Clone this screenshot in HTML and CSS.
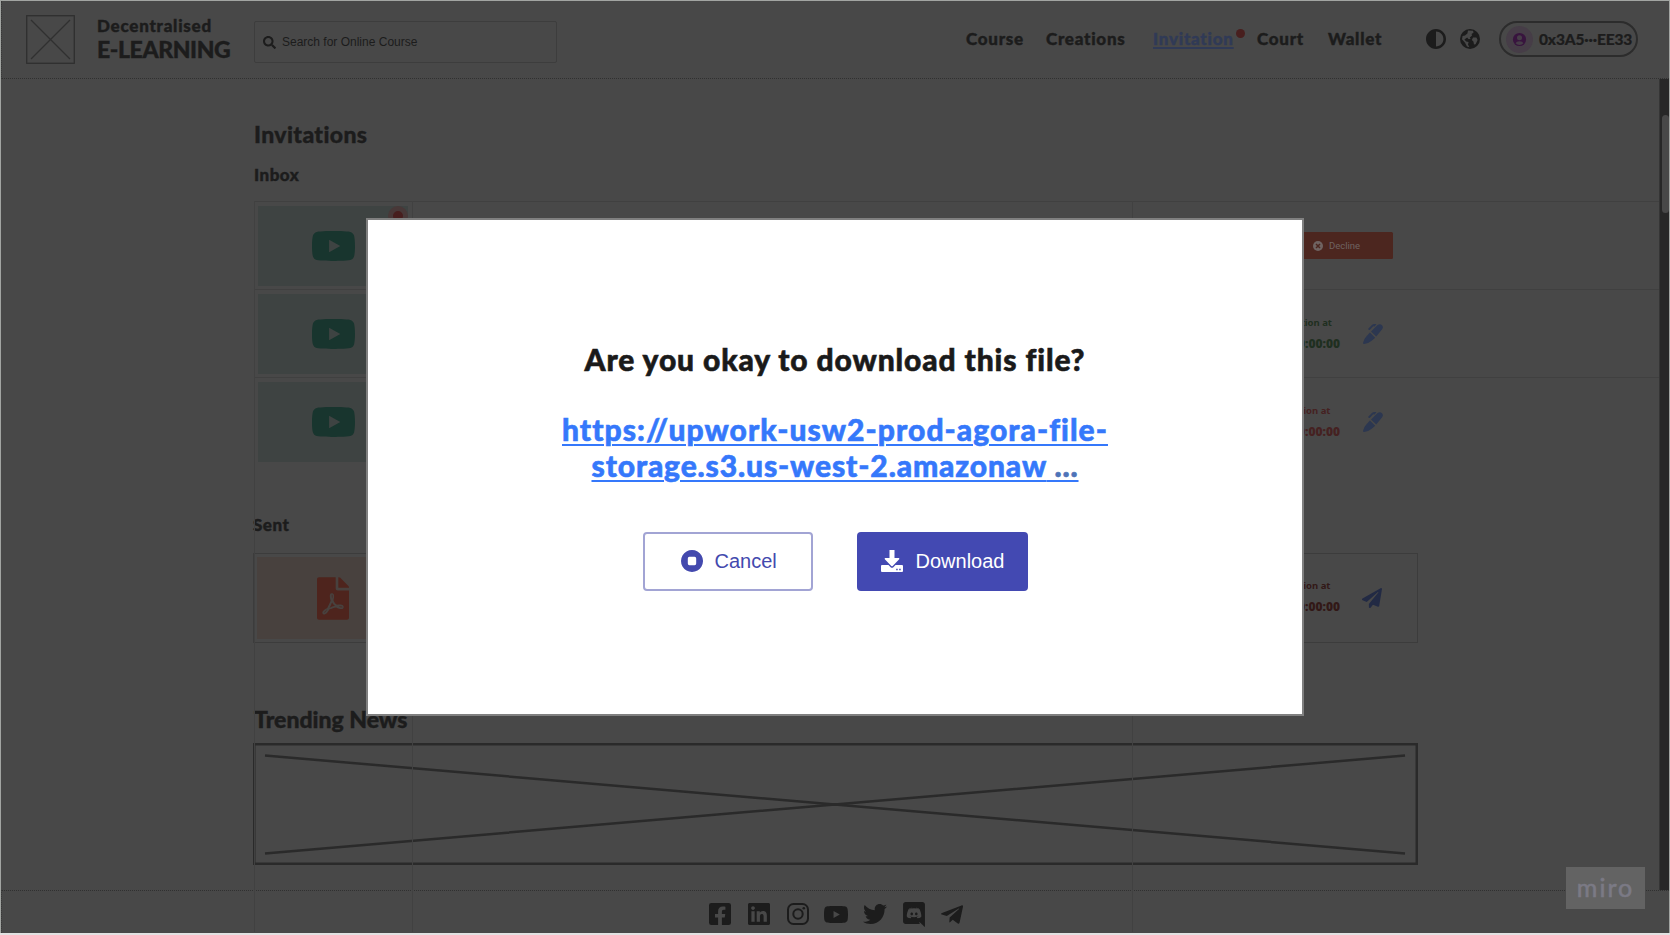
FILE: index.html
```html
<!DOCTYPE html>
<html lang="en">
<head>
<meta charset="utf-8">
<title>Decentralised E-Learning</title>
<link rel="stylesheet" href="styles.css">
</head>
<body>
<svg class="sprite" aria-hidden="true">
  <symbol id="youtube" viewBox="15 64 546 384" preserveAspectRatio="none"><path d="M549.655 124.083c-6.281-23.65-24.787-42.276-48.284-48.597C458.781 64 288 64 288 64S117.22 64 74.629 75.486c-23.497 6.322-42.003 24.947-48.284 48.597-11.412 42.867-11.412 132.305-11.412 132.305s0 89.438 11.412 132.305c6.281 23.65 24.787 41.5 48.284 47.821C117.22 448 288 448 288 448s170.78 0 213.371-11.486c23.497-6.321 42.003-24.171 48.284-47.821 11.412-42.867 11.412-132.305 11.412-132.305s0-89.438-11.412-132.305zm-317.51 213.508V175.185l142.739 81.205-142.739 81.201z"/></symbol>
  <symbol id="pen" viewBox="0 0 512 512"><path d="M205 192 365 35Q405-5 462 10 512 35 510 85 505 115 480 145L338 322z"/><path d="M128 125 235 22Q258 0 285 0H345L300 62 262 60 172 152Q150 158 128 125z"/><path d="M178 220 312 350 222 430A327 327 0 0 1 26 512C11 513-2 500 0 485A327 327 0 0 1 84 320z"/></symbol>
  <symbol id="plane" viewBox="0 0 512 512"><path d="M476 3.2L12.5 270.6c-18.1 10.4-15.8 35.6 2.2 43.2L121 358.4l287.3-253.2c5.5-4.9 13.3 2.6 8.6 8.3L176 407v80.5c0 23.6 28.5 32.9 42.5 15.8L282 426l124.6 52.2c14.2 6 30.4-2.9 33-18.2l72-432C515 7.8 493.3-6.8 476 3.2z"/></symbol>
</svg>

<div class="app">
  <header class="header">
    <svg class="logo" viewBox="0 0 49 49"><rect x=".7" y=".7" width="47.6" height="47.6"/><path d="M5 5 44 44M44 5 5 44"/></svg>
    <div class="brand"><span class="brand-top">Decentralised</span><span class="brand-main">E-LEARNING</span></div>
    <div class="search">
      <svg viewBox="0 0 512 512"><path d="M505 442.7L405.3 343c-4.5-4.5-10.6-7-17-7H372c27.6-35.3 44-79.7 44-128C416 93.1 322.9 0 208 0S0 93.1 0 208s93.1 208 208 208c48.3 0 92.7-16.4 128-44v16.3c0 6.4 2.5 12.5 7 17l99.7 99.7c9.4 9.4 24.6 9.4 33.9 0l28.3-28.3c9.4-9.4 9.4-24.6.1-34zM208 336c-70.7 0-128-57.2-128-128 0-70.7 57.2-128 128-128 70.7 0 128 57.2 128 128 0 70.7-57.2 128-128 128z"/></svg>
      <span>Search for Online Course</span>
    </div>
    <nav class="nav">
      <a class="n-course">Course</a><a class="n-creations">Creations</a><a class="n-invitation">Invitation<i class="dot"></i></a><a class="n-court">Court</a><a class="n-wallet">Wallet</a>
    </nav>
    <svg class="tool" viewBox="8 8 496 496"><path d="M8 256c0 136.966 111.033 248 248 248s248-111.034 248-248S392.966 8 256 8 8 119.033 8 256zm248 184V72c101.705 0 184 82.311 184 184 0 101.705-82.311 184-184 184z"/></svg>
    <svg class="tool globe" viewBox="0 0 20 20"><circle cx="10" cy="10" r="10"/><path class="land" d="M8 1.6 13 1.8 13.6 3.4 11.6 5 12 6.6 9.8 8.4 10.6 10 8.4 10 7.2 8.4 4.4 10.4 6.2 12.4 8.6 13 8 15.4 9.4 18.2 7 17.6 5 13.8 2 10.2 2.6 7 5 6.6 7.4 4.4zM13 8.6 16.4 8.4 17.6 11 15.6 15.2 14 15.4 13.4 12.4 11.8 11z"/></svg>
    <div class="wallet">
      <span class="avatar"><svg viewBox="0 0 16 16"><circle cx="8" cy="8" r="7"/><circle class="hole" cx="8" cy="6.2" r="2.7"/><path class="hole" d="M3.8 12.1Q4.5 9.8 8 9.8T12.2 12.1Q10.5 13.9 8 13.9T3.8 12.1z"/></svg></span>
      <span class="address">0x3A5···EE33</span>
    </div>
  </header>

  <main class="main">
    <div class="guides"><i></i><i></i><i></i></div>
    <section class="content">
      <h1 class="title invitations">Invitations</h1>
      <h2 class="subtitle inbox-title">Inbox</h2>
      <div class="inbox">
        <article class="row">
          <div class="thumb"><svg class="yt"><use href="#youtube"/></svg><i class="live"></i></div>
          <button class="decline"><svg viewBox="0 0 10 10"><circle cx="5" cy="5" r="5"/><path d="M3 3 7 7M7 3 3 7"/></svg>Decline</button>
        </article>
        <article class="row">
          <div class="thumb"><svg class="yt"><use href="#youtube"/></svg></div>
          <div class="expiry green"><span>Expiration at</span><b>00:00:00</b></div>
          <svg class="action"><use href="#pen"/></svg>
        </article>
        <article class="row">
          <div class="thumb"><svg class="yt"><use href="#youtube"/></svg></div>
          <div class="expiry red"><span class="shift">Expiration at</span><b>00:00:00</b></div>
          <svg class="action"><use href="#pen"/></svg>
        </article>
      </div>
      <h2 class="subtitle sent-title">Sent</h2>
      <article class="row sent">
        <div class="thumb file"><svg viewBox="0 0 384 512"><path d="M181.9 256.1c-5-16-4.9-46.9-2-46.9 8.4 0 7.6 36.9 2 46.9zm-1.7 47.2c-7.7 20.2-17.3 43.3-28.4 62.7 18.3-7 39-17.2 62.9-21.9-12.7-9.6-24.9-23.4-34.5-40.8zM86.1 428.1c0 .8 13.2-5.4 34.9-40.2-6.7 6.3-29.1 24.5-34.9 40.2zM248 160h136v328c0 13.3-10.7 24-24 24H24c-13.3 0-24-10.7-24-24V24C0 10.7 10.7 0 24 0h200v136c0 13.2 10.8 24 24 24zm-8 171.8c-20-12.2-33.3-29-42.7-53.8 4.5-18.5 11.6-46.6 6.2-64.2-4.7-29.4-42.4-26.5-47.8-6.8-5 18.3-.4 44.1 8.1 77-11.6 27.6-28.7 64.6-40.8 85.8-.1 0-.1.1-.2.1-27.1 13.9-73.6 44.5-54.5 68 5.6 6.9 16 10 21.5 10 17.9 0 35.7-18 61.1-61.8 25.8-8.5 54.1-19.1 79-23.2 21.7 11.8 47.1 19.5 64 19.5 29.2 0 31.2-32 19.7-43.4-13.9-13.6-54.3-9.7-73.6-7.2zM377 105L279 7c-4.5-4.5-10.6-7-17-7h-6v128h128v-6.1c0-6.3-2.5-12.4-7-16.9zm-74.1 255.3c4.1-2.7-2.5-11.9-42.8-9 37.1 15.8 42.8 9 42.8 9z"/></svg></div>
        <div class="expiry dark"><span class="shift">Expiration at</span><b>00:00:00</b></div>
        <svg class="action send"><use href="#plane"/></svg>
      </article>
      <h1 class="title trending">Trending News</h1>
      <svg class="news" viewBox="0 0 1165 122"><rect x="1.25" y="1.25" width="1162.5" height="119.5"/><path d="M12 12.5 1152 110.5M1152 12.5 12 110.5"/></svg>
    </section>
    <div class="scrollbar"><i></i></div>
  </main>

  <footer class="footer">
    <svg width="22" height="22" viewBox="0 32 448 448"><path d="M400 32H48A48 48 0 0 0 0 80v352a48 48 0 0 0 48 48h137.25V327.69h-63V256h63v-54.64c0-62.15 37-96.48 93.67-96.48 27.14 0 55.52 4.84 55.52 4.84v61h-31.27c-30.81 0-40.42 19.12-40.42 38.73V256h68.78l-11 71.69h-57.78V480H400a48 48 0 0 0 48-48V80a48 48 0 0 0-48-48z"/></svg>
    <svg width="22" height="22" viewBox="0 32 448 448"><path d="M416 32H31.9C14.3 32 0 46.5 0 64.3v383.4C0 465.5 14.3 480 31.9 480H416c17.6 0 32-14.5 32-32.3V64.3c0-17.8-14.4-32.3-32-32.3zM135.4 416H69V202.2h66.5V416zm-33.2-243c-21.3 0-38.5-17.3-38.5-38.5S80.9 96 102.2 96c21.2 0 38.5 17.3 38.5 38.5 0 21.3-17.2 38.5-38.5 38.5zm282.1 243h-66.4V312c0-24.8-.5-56.7-34.5-56.7-34.6 0-39.9 27-39.9 54.9V416h-66.4V202.2h63.7v29.2h.9c8.9-16.8 30.6-34.5 62.9-34.5 67.2 0 79.7 44.3 79.7 101.9V416z"/></svg>
    <svg class="line" width="22" height="22" viewBox="0 0 22 22"><rect x="1" y="1" width="20" height="20" rx="5.5"/><circle cx="11" cy="11" r="4.7"/><circle class="fill" cx="16.8" cy="5.2" r="1.3"/></svg>
    <svg width="24" height="17"><use href="#youtube"/></svg>
    <svg width="24" height="20" viewBox="0 48 512 416" preserveAspectRatio="none"><path d="M459.37 151.716c.325 4.548.325 9.097.325 13.645 0 138.72-105.583 298.558-298.558 298.558-59.452 0-114.68-17.219-161.137-47.106 8.447.974 16.568 1.299 25.34 1.299 49.055 0 94.213-16.568 130.274-44.832-46.132-.975-84.792-31.188-98.112-72.772 6.498.974 12.995 1.624 19.818 1.624 9.421 0 18.843-1.3 27.614-3.573-48.081-9.747-84.143-51.98-84.143-102.985v-1.299c13.969 7.797 30.214 12.67 47.431 13.319-28.264-18.843-46.781-51.005-46.781-87.391 0-19.492 5.197-37.36 14.294-52.954 51.655 63.675 129.3 105.258 216.365 109.807-1.624-7.797-2.599-15.918-2.599-24.04 0-57.828 46.782-104.934 104.934-104.934 30.213 0 57.502 12.67 76.67 33.137 23.715-4.548 46.456-13.32 66.599-25.34-7.798 24.366-24.366 44.833-46.132 57.827 21.117-2.273 41.584-8.122 60.426-16.243-14.292 20.791-32.161 39.308-52.628 54.253z"/></svg>
    <svg width="22" height="25" viewBox="0 0 448 512"><path d="M297.216 243.2c0 15.616-11.52 28.416-26.112 28.416-14.336 0-26.112-12.8-26.112-28.416s11.52-28.416 26.112-28.416c14.592 0 26.112 12.8 26.112 28.416zm-119.552-28.416c-14.592 0-26.112 12.8-26.112 28.416s11.776 28.416 26.112 28.416c14.592 0 26.112-12.8 26.112-28.416.256-15.616-11.52-28.416-26.112-28.416zM448 52.736V512c-64.494-56.994-43.868-38.128-118.784-107.776l13.568 47.36H52.48C23.552 451.584 0 428.032 0 398.848V52.736C0 23.552 23.552 0 52.48 0h343.04C424.448 0 448 23.552 448 52.736zm-72.96 242.688c0-82.432-36.864-149.248-36.864-149.248-36.864-27.648-71.936-26.88-71.936-26.88l-3.584 4.096c43.52 13.312 63.744 32.512 63.744 32.512-60.811-33.329-132.244-33.335-191.232-7.424-9.472 4.352-15.104 7.424-15.104 7.424s21.248-20.224 67.328-33.536l-2.56-3.072s-35.072-.768-71.936 26.88c0 0-36.864 66.816-36.864 149.248 0 0 21.504 37.12 78.08 38.912 0 0 9.472-11.52 17.152-21.248-32.512-9.728-44.8-30.208-44.8-30.208 3.766 2.636 9.976 6.053 10.496 6.4 43.21 24.198 104.588 32.126 159.744 8.96 8.96-3.328 18.944-8.192 29.44-15.104 0 0-12.8 20.992-46.336 30.464 7.68 9.728 16.896 20.736 16.896 20.736 56.576-1.792 78.336-38.912 78.336-38.912z"/></svg>
    <svg width="22" height="19" viewBox="0 64 448 376"><path d="M446.7 98.6l-67.6 318.8c-5.1 22.5-18.4 28.1-37.3 17.5l-103-75.9-49.7 47.8c-5.5 5.5-10.1 10.1-20.7 10.1l7.4-104.9 190.9-172.5c8.3-7.4-1.8-11.5-12.9-4.1L117.8 284 16.2 252.2c-22.1-6.9-22.5-22.1 4.6-32.7L418.2 66.4c18.4-6.9 34.5 4.1 28.5 32.2z"/></svg>
  </footer>
</div>

<div class="modal" role="dialog">
  <h2 class="question">Are you okay to download this file?</h2>
  <a class="link"><span class="l1">https://upwork-usw2-prod-agora-file-</span><br><span class="l2">storage.s3.us-west-2.amazonaw<em> ...</em></span></a>
  <div class="buttons">
    <button class="btn cancel"><svg width="22" height="22" viewBox="0 0 21 21"><path fill-rule="evenodd" d="M10.500 0a10.500 10.500 0 1 0 .01 0zM8 6.500h5q1.500 0 1.500 1.500v5q0 1.500-1.500 1.500H8q-1.500 0-1.500-1.500V8q0-1.500 1.500-1.500z"/></svg>Cancel</button>
    <button class="btn download"><svg width="22" height="22" viewBox="0 0 22 22"><path fill-rule="evenodd" d="M8.500 0h5v8h4.300q1 .3.400 1.200L11.700 16q-.7.500-1.400 0L3.800 9.200Q3.200 8.300 4.200 8h4.300zM1 15h6.500l2.400 2.400q1.100.8 2.200 0L14.500 15H21q1 0 1 1v5q0 1-1 1H1q-1 0-1-1v-5q0-1 1-1zM15.200 18.700v1.500h1.500v-1.500zM18.200 18.700v1.500h1.500v-1.500z"/></svg>Download</button>
  </div>
</div>
<div class="miro">miro</div>
</body>
</html>
```
FILE: styles.css
```css
* { box-sizing: border-box; }
body {
  margin: 0;
  position: relative;
  width: 1670px;
  height: 935px;
  overflow: hidden;
  background: #e2e2e2;
  font-family: "Liberation Sans", Arial, sans-serif;
}
svg { display: block; flex: none; fill: currentColor; }
button { font-family: inherit; }
.sprite { position: absolute; width: 0; height: 0; }

.app {
  width: 1670px;
  height: 933px;
  display: flex;
  flex-direction: column;
  background: #484848;
  color: #1c1c1c;
  border: 1px solid #a2a5a2;
  border-bottom: 0;
}

/* header */
.header {
  height: 78px;
  flex: none;
  display: flex;
  align-items: flex-start;
  border-bottom: 1px dotted #303030;
  border-left: 1px dotted #383838;
  font-family: Lato, sans-serif;
  font-weight: 900;
}
.logo { width: 49px; height: 49px; margin: 14px 0 0 24px; fill: none; stroke: #303030; stroke-width: 1.3; }
.brand { width: 157px; margin: 14px 0 0 22px; display: flex; flex-direction: column; white-space: nowrap; -webkit-text-stroke: .4px; }
.brand-top { font-size: 17px; line-height: 22px; letter-spacing: .75px; }
.brand-main { font-size: 23px; line-height: 24px; letter-spacing: -.4px; }
.search {
  width: 303px;
  height: 42px;
  margin-top: 20px;
  padding-left: 8px;
  display: flex;
  align-items: center;
  gap: 6px;
  border: 1.5px solid #3d3d3d;
  border-radius: 2px;
  font: 12px "Liberation Sans", Arial, sans-serif;
}
.search svg { width: 13px; height: 13px; }
.nav { width: 869px; margin-top: 27px; padding-left: 409px; display: flex; font-size: 17px; line-height: 22px; letter-spacing: .74px; white-space: nowrap; -webkit-text-stroke: .4px; }
.nav a { flex: none; }
.n-course { width: 80px; }
.n-creations { width: 107px; }
.n-invitation { width: 104px; position: relative; color: #303a56; text-decoration: underline; text-decoration-thickness: 1.5px; text-underline-offset: 2px; }
.n-court { width: 71px; }
.dot { position: absolute; left: 83px; top: 1px; width: 9px; height: 9px; border-radius: 50%; background: #481f1e; }
.tool { width: 20px; height: 20px; margin: 28px 14px 0 0; }
.globe { margin-right: 19px; }
.land { fill: #484848; }
.wallet {
  width: 139px;
  height: 36px;
  margin-top: 20px;
  padding-left: 5px;
  display: flex;
  align-items: center;
  gap: 6px;
  border: 2px solid #2c2c2c;
  border-radius: 18px;
}
.avatar { width: 27px; height: 27px; flex: none; border-radius: 50%; background: #463d47; color: #38143e; display: grid; place-items: center; }
.avatar svg { width: 15px; height: 15px; }
.hole { fill: #463d47; }
.address { font-size: 15.500px; letter-spacing: -.15px; white-space: nowrap; -webkit-text-stroke: .2px; }

/* body */
.main { flex: 1; display: flex; position: relative; }
.content { width: 1658px; padding-left: 253px; }
.guides { position: absolute; left: 253px; top: 122px; width: 880px; height: 731px; display: grid; grid-template-columns: 158px 720px 1px; pointer-events: none; }
.guides i { border-left: 1px solid #414141; }
.title, .subtitle { margin: 0; font-family: Lato, sans-serif; font-weight: 900; white-space: nowrap; -webkit-text-stroke: .4px; }
.title { font-size: 23px; line-height: 28px; }
.subtitle { font-size: 17px; line-height: 20px; letter-spacing: .5px; }
.invitations { padding-top: 41px; letter-spacing: .38px; }
.inbox-title { padding-top: 17px; height: 53px; }
.inbox { height: 310px; }
.row { height: 88px; border-top: 1px solid #404040; display: flex; padding: 4px 0 0 4px; }
.thumb { width: 150px; height: 80px; flex: none; position: relative; background: #3e4342; color: #18352e; display: grid; place-items: center; }
.yt { width: 43px; height: 30px; }
.live { position: absolute; right: 0; top: 0; width: 20px; height: 20px; border-radius: 50%; background: #471e1e; border: 5px solid #483838; }
.decline {
  margin: 26px 0 0 878px;
  width: 107px;
  height: 27px;
  padding: 0 0 0 27px;
  display: flex;
  align-items: center;
  gap: 6px;
  border: 0;
  border-radius: 1.5px;
  background: #4c261f;
  color: #6f6361;
  font: 9.500px Roboto, sans-serif;
}
.decline svg { width: 10px; height: 10px; }
.decline path { stroke: #4c261f; stroke-width: 1.5; }
.expiry { width: 932px; padding-top: 21px; display: flex; flex-direction: column; align-items: flex-end; font-family: "Noto Sans", sans-serif; font-weight: 700; }
.expiry span { font-size: 9.500px; line-height: 16px; margin-right: 8px; }
.expiry .shift { margin-right: 9.500px; }
.expiry b { font-size: 12px; line-height: 26px; }
.green { color: #1f2f20; }
.red { color: #452121; }
.dark { color: #321817; }
.action { width: 20px; height: 20px; margin: 30px 0 0 23px; color: #2c3750; }
.sent-title { padding-top: 4px; height: 42px; margin-left: -1px; }
.sent { width: 1165px; height: 90px; margin-left: -1px; padding: 3px 0 0 3px; border: 1.500px solid #3c3c3c; }
.file { width: 151px; height: 82px; background: #48413e; color: #4e241d; }
.file svg { width: 32px; height: 43px; }
.sent .expiry { padding-top: 21px; }
.send { color: #222a44; margin-left: 22px; margin-top: 31px; }
.trending { padding-top: 62px; height: 100px; }
.news { width: 1165px; height: 122px; margin-left: -1px; fill: none; stroke: #2a2a2a; stroke-width: 2.500; }
.scrollbar { width: 10px; height: 811px; background: #272727; border-left: 1px solid #353535; padding: 36px 0 0 2px; }
.scrollbar i { display: block; width: 7px; height: 98px; border-radius: 4px; background: #484848; }

/* footer */
.footer {
  height: 43px;
  flex: none;
  border-top: 1px dotted #303030;
  border-left: 1px dotted #383838;
  padding: 4px 0 0 699px;
  display: grid;
  grid-template-columns: repeat(7, 38.700px);
  justify-items: center;
  align-items: center;
}
.line { fill: none; stroke: currentColor; stroke-width: 2; }
.line .fill { fill: currentColor; stroke: none; }

/* dialog */
.modal {
  position: absolute;
  left: 366px;
  top: 218px;
  width: 938px;
  height: 498px;
  padding-top: 119px;
  background: #fff;
  border: 2px solid #808080;
  text-align: center;
  font-family: Lato, sans-serif;
  font-weight: 900;
  -webkit-text-stroke: .6px;
}
.question { margin: 0; font-size: 30px; line-height: 40px; font-weight: 900; letter-spacing: .88px; color: #1a1a1a; }
.link { display: block; margin-top: 32px; font-size: 30px; line-height: 36px; color: #3578fb; text-decoration: underline; text-decoration-thickness: 2px; text-underline-offset: 3px; }
.l1 { letter-spacing: 1.05px; }
.l2 { letter-spacing: .87px; }
.link em { font-style: normal; color: #4d74b8; }
.buttons { margin-top: 49px; display: flex; justify-content: center; gap: 44px; }
.btn { height: 59px; display: flex; align-items: center; border-radius: 4px; font: 20px "Liberation Sans", Arial, sans-serif; padding: 0 0 1px; -webkit-text-stroke: 0; }
.cancel { width: 170px; padding-left: 36px; gap: 12px; border: 2px solid #a2a4d4; background: #fff; color: #4349ae; }
.download { width: 171px; padding-left: 24px; gap: 13px; border: 0; background: #4349b2; color: #fff; }

.miro {
  position: absolute;
  left: 1566px;
  top: 867px;
  width: 79px;
  height: 42px;
  background: #636363;
  color: #7b7a85;
  font: 400 25px/40px Lato, sans-serif;
  letter-spacing: 2px;
  -webkit-text-stroke: .6px;
  text-align: center;
}
```
